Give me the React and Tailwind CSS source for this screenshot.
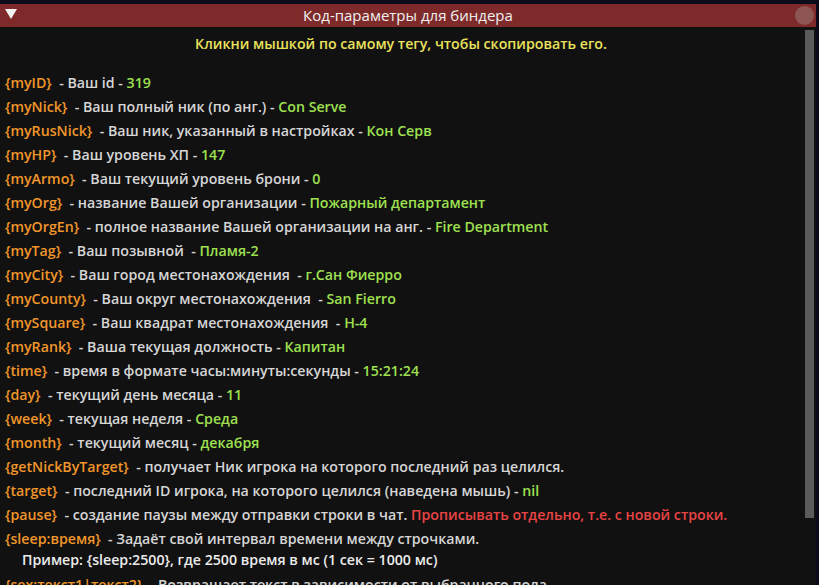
import React from "react";

const rows = [
  { tag: "{myID}", text: " - Ваш id - ", value: "319" },
  { tag: "{myNick}", text: " - Ваш полный ник (по анг.) - ", value: "Con Serve" },
  { tag: "{myRusNick}", text: " - Ваш ник, указанный в настройках - ", value: "Кон Серв" },
  { tag: "{myHP}", text: " - Ваш уровень ХП - ", value: "147" },
  { tag: "{myArmo}", text: " - Ваш текущий уровень брони - ", value: "0" },
  { tag: "{myOrg}", text: " - название Вашей организации - ", value: "Пожарный департамент" },
  { tag: "{myOrgEn}", text: " - полное название Вашей организации на анг. - ", value: "Fire Department" },
  { tag: "{myTag}", text: " - Ваш позывной  - ", value: "Пламя-2" },
  { tag: "{myCity}", text: " - Ваш город местонахождения  - ", value: "г.Сан Фиерро" },
  { tag: "{myCounty}", text: " - Ваш округ местонахождения  - ", value: "San Fierro" },
  { tag: "{mySquare}", text: " - Ваш квадрат местонахождения  - ", value: "Н-4" },
  { tag: "{myRank}", text: " - Ваша текущая должность - ", value: "Капитан" },
  { tag: "{time}", text: " - время в формате часы:минуты:секунды - ", value: "15:21:24" },
  { tag: "{day}", text: " - текущий день месяца - ", value: "11" },
  { tag: "{week}", text: " - текущая неделя - ", value: "Среда" },
  { tag: "{month}", text: " - текущий месяц - ", value: "декабря" },
  { tag: "{getNickByTarget}", text: " - получает Ник игрока на которого последний раз целился." },
  { tag: "{target}", text: " - последний ID игрока, на которого целился (наведена мышь) - ", value: "nil" },
  { tag: "{pause}", text: " - создание паузы между отправки строки в чат. ", warn: "Прописывать отдельно, т.е. с новой строки." },
  { tag: "{sleep:время}", text: " - Задаёт свой интервал времени между строчками." },
];

const Row = ({ row }) => (
  <div className="h-[24px] flex items-center whitespace-pre">
    <span className="text-[#f0962a]">{row.tag}</span>
    <span className="text-[#d6d6d6]"> {row.text}</span>
    {row.value && <span className="text-[#9fe050]">{row.value}</span>}
    {row.warn && <span className="text-[#e84444]">{row.warn}</span>}
  </div>
);

export default function App() {
  return (
    <div
      className="w-[819px] h-[585px] overflow-hidden bg-[#0c0b1a] pt-[4px] text-[14.2px] font-semibold"
      style={{ fontFamily: '"Open Sans", "Noto Sans", sans-serif' }}
    >
      <div className="w-[816px] h-[581px] flex flex-col bg-[#111111]">
        {/* title bar */}
        <div className="h-[23px] shrink-0 bg-[#7e2a2b] flex items-center relative">
          <svg className="absolute left-[5px] top-[5px]" width="12" height="11" viewBox="0 0 12 11">
            <polygon points="0,0 12,0 6,10" fill="#f2f2f2" />
          </svg>
          <div className="flex-1 text-center text-[#f0f0f0] text-[15px] font-medium">Код-параметры для биндера</div>
          <div className="absolute right-[2px] top-[2px] w-[19px] h-[19px] rounded-full bg-[#8e5555]" />
        </div>

        <div className="flex flex-1 min-h-0">
          <div className="flex-1 min-w-0 pl-[5px]">
            <div className="h-[35px] pt-[6px] text-center text-[#e9e25c] pr-[8px]">
              Кликни мышкой по самому тегу, чтобы скопировать его.
            </div>
            <div className="h-[9px]" />
            {rows.map((r) => (
              <Row key={r.tag} row={r} />
            ))}
            <div className="h-[18px] flex items-center pl-[17px] text-[#ececec] whitespace-pre">
              Пример: {"{sleep:2500}"}, где 2500 время в мс (1 сек = 1000 мс)
            </div>
            <div className="h-[32px] flex items-center whitespace-pre">
              <span className="text-[#f0962a]">{"{sex:текст1|текст2}"}</span>
              <span className="text-[#d6d6d6]">  - Возвращает текст в зависимости от выбранного пола</span>
            </div>
          </div>
          <div className="w-[11px] shrink-0 pt-[3px] pr-[2px]">
            <div className="h-[488px] w-[9px] bg-[#5b5b5b]" />
          </div>
        </div>
      </div>
    </div>
  );
}
